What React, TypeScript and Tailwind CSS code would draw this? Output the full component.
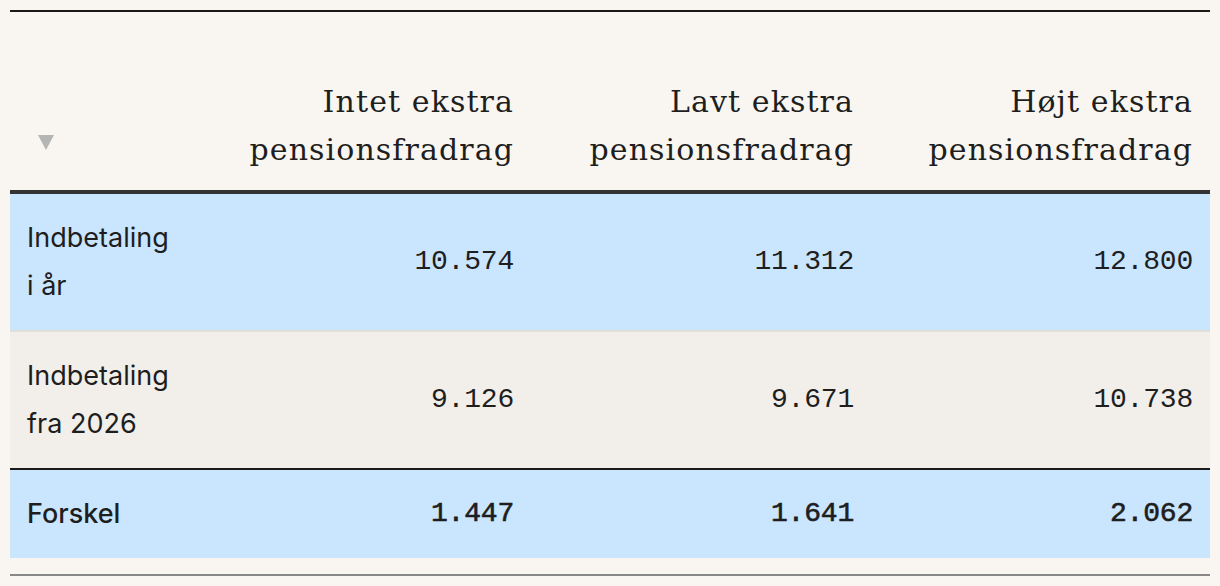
import React from "react";

const serif = { fontFamily: '"DejaVu Serif", "Liberation Serif", serif' };
const sans = { fontFamily: 'Inter, "Noto Sans", sans-serif' };
const mono = { fontFamily: '"Liberation Mono", "DejaVu Sans Mono", monospace' };

const heads = [
  ["Intet ekstra", "pensionsfradrag"],
  ["Lavt ekstra", "pensionsfradrag"],
  ["Højt ekstra", "pensionsfradrag"],
];

const rows = [
  { label: ["Indbetaling", "i år"], vals: ["10.574", "11.312", "12.800"], bg: "bg-[#cae5fe]", bold: false },
  { label: ["Indbetaling", "fra 2026"], vals: ["9.126", "9.671", "10.738"], bg: "bg-[#f2efeb]", bold: false },
  { label: ["Forskel"], vals: ["1.447", "1.641", "2.062"], bg: "bg-[#cae5fe]", bold: true },
];

function Row({ r }: { r: (typeof rows)[number] }) {
  return (
    <div className={`grid grid-cols-[181px_340px_340px_339px] ${r.bg} py-[20px] text-[#1e1e1e]`}>
      <div className="pl-[17px] text-[27px] leading-[48px]" style={sans}>
        {r.label.map((l) => (
          <div key={l} className={r.bold ? "font-medium" : ""}>{l}</div>
        ))}
      </div>
      {r.vals.map((v) => (
        <div
          key={v}
          className={`flex items-center justify-end pr-[17px] text-[28px] leading-[48px] tracking-[-0.2px] ${r.bold ? "[-webkit-text-stroke:0.6px_#1e1e1e]" : ""}`}
          style={mono}
        >
          {v}
        </div>
      ))}
    </div>
  );
}

export default function App() {
  return (
    <div className="min-h-screen w-full bg-[#f9f6f1] px-[10px] pt-[10px]">
      <div className="border-t-2 border-[#1a1a1a]">
        <div className="grid h-[182px] grid-cols-[181px_340px_340px_339px] border-b-4 border-[#333333]">
          <div className="flex items-end pb-[40px] pl-[28px]">
            <svg width="16" height="16" viewBox="0 0 16 16">
              <polygon points="0,1 16,1 8,16" fill="#b5b5b3" />
            </svg>
          </div>
          {heads.map((h) => (
            <div
              key={h[1] + h[0]}
              className="flex flex-col items-end justify-end pb-[16px] pr-[17px] text-[30px] leading-[48px] tracking-[1.1px] text-[#1e1e1e]"
              style={serif}
            >
              <div>{h[0]}</div>
              <div>{h[1]}</div>
            </div>
          ))}
        </div>
        <Row r={rows[0]} />
        <div className="h-[2px] bg-[#e2dfdb]" />
        <Row r={rows[1]} />
        <div className="h-[2px] bg-[#1a1a1a]" />
        <Row r={rows[2]} />
        <div className="mt-[16px] h-[2px] bg-[#888888]" />
      </div>
    </div>
  );
}
